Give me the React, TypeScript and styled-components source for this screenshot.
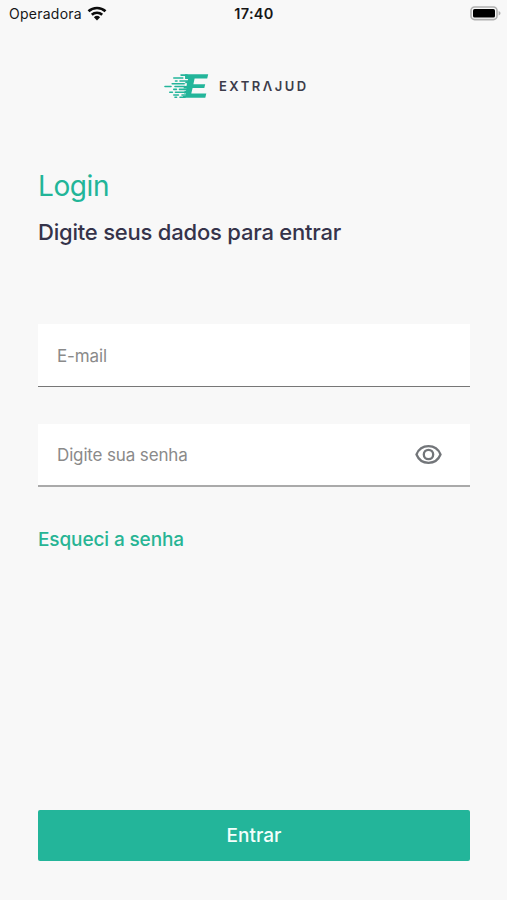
import React from "react";
import styled, { createGlobalStyle } from "styled-components";

const GlobalStyle = createGlobalStyle`
  *, *::before, *::after { box-sizing: border-box; }
  body { margin: 0; background: #f8f8f8; }
  button, input { font-family: inherit; }
`;

const Screen = styled.main`
  display: flex;
  flex-direction: column;
  width: 100%;
  height: 900px;
  background: #f8f8f8;
  font-family: Inter, "Liberation Sans", sans-serif;
`;

const StatusBar = styled.header`
  display: grid;
  grid-template-columns: 1fr auto 1fr;
  align-items: center;
  height: 26px;
  padding: 0 6px 0 9px;
  color: #161616;
`;

const Carrier = styled.div`
  display: flex;
  align-items: center;
  gap: 5px;
  font-size: 14px;
  letter-spacing: 0.25px;
`;

const Clock = styled.time`
  margin-right: 2px;
  font-size: 14.5px;
  font-weight: 600;
  letter-spacing: 0.3px;
`;

const Battery = styled.svg`
  justify-self: end;
  display: block;
`;

const Brand = styled.div`
  display: flex;
  align-items: center;
  gap: 10px;
  height: 26px;
  margin: 47px 0 0 164px;
`;

const Wordmark = styled.span`
  color: #3c3c4a;
  font-size: 13px;
  line-height: 26px;
  font-weight: 600;
  letter-spacing: 2.5px;
`;

const Content = styled.form`
  flex: 1;
  display: flex;
  flex-direction: column;
  align-items: flex-start;
  padding: 69px 37px 39px 38px;
`;

const Title = styled.h1`
  margin: 0;
  color: #22b598;
  font-size: 28px;
  line-height: 36px;
  font-weight: 400;
  letter-spacing: -0.4px;
`;

const Subtitle = styled.h2`
  margin: 13px 0 77px;
  color: #35334a;
  font-size: 22px;
  line-height: 30px;
  font-weight: 500;
  letter-spacing: -0.21px;
  white-space: nowrap;
`;

const Field = styled.label<{ $soft?: boolean }>`
  display: flex;
  align-items: center;
  width: 100%;
  height: 63px;
  margin-bottom: 37px;
  padding: 0 28px 0 19px;
  background: #fff;
  border-bottom: ${(p) => (p.$soft ? "2px solid #aaaaaa" : "1px solid #777777")};
`;

const Input = styled.input`
  flex: 1;
  min-width: 0;
  height: 100%;
  padding: 1px 0 0;
  border: 0;
  outline: 0;
  background: transparent;
  color: #333;
  font-size: 17px;
  letter-spacing: -0.14px;
  &::placeholder { color: #8a8a8a; opacity: 1; }
`;

const EyeButton = styled.button`
  display: flex;
  padding: 0;
  border: 0;
  background: none;
`;

const ForgotLink = styled.a`
  margin-top: 1px;
  color: #27b494;
  font-size: 19px;
  line-height: 30px;
  font-weight: 500;
  letter-spacing: -0.12px;
  text-decoration: none;
`;

const SubmitButton = styled.button`
  width: 100%;
  height: 51px;
  margin-top: auto;
  padding: 0;
  border: 0;
  border-radius: 2px;
  background: #23b59a;
  color: #f4fffc;
  font-size: 19px;
  font-weight: 500;
`;

const WifiIcon = () => (
  <svg width="20" height="15" viewBox="0 0 20 15" fill="none" stroke="#0c0c0c" strokeWidth="2.6">
    <path d="M1.5 5.3a12.4 12.4 0 0 1 17 0" />
    <path d="M4.8 8.8a7.6 7.6 0 0 1 10.4 0" />
    <path d="M10 14.4 6.9 11.2a4.5 4.5 0 0 1 6.2 0z" fill="#0c0c0c" stroke="none" />
  </svg>
);

const BatteryIcon = () => (
  <Battery width="31" height="15" viewBox="0 0 31 15">
    <rect x="1" y="1" width="26" height="12.6" rx="3.6" fill="#f8f8f8" stroke="#b0b0b0" strokeWidth="1.6" />
    <rect x="3" y="3" width="22" height="8.6" rx="1.6" fill="#000" />
    <path d="M28.6 5v4.6c1.3-.5 1.9-1.3 1.9-2.3s-.6-1.8-1.9-2.3z" fill="#b0b0b0" />
  </Battery>
);

const LogoMark = () => (
  <svg width="45" height="26" viewBox="0 0 45 26" fill="#23b59a">
    <path d="M21 1.2h23.2l-1 4.2H30.6l-1.2 5.8h11.8l-.9 3.8H28.6l-1.3 5.5h15l-1 4.3H18.6l.5-2h2.4l.5-2.2h-2l.6-2.8h1.4l.5-2.3h-3l.5-2.4h2.5l.6-2.8h-2l.5-2h2l.5-2.3h-3z" />
    <g fill="none" stroke="#23b59a" strokeWidth="1.6" strokeLinecap="round">
      <path d="M17 2.1h6M9.8 5h9M11.5 8h1.5M16 8h8M8.2 10.7h12M1 13.5h6M11 13.5h10M9.8 16.4h2.6M15.5 16.4h7M5.8 19.3h2.6M11.5 19.3h9M9.8 22h4.6M18 22h4M11 24.2h1.6M16 24.2h5" />
    </g>
  </svg>
);

const EyeIcon = () => (
  <svg width="27" height="21" viewBox="0 0 27 21" fill="none" stroke="#727579" strokeWidth="2.3">
    <path d="M1.5 10.5C3.7 5 8.2 2.2 13.5 2.2s9.8 2.8 12 8.3c-2.2 5.5-6.7 8.3-12 8.3S3.7 16 1.5 10.5z" />
    <circle cx="13.5" cy="10.5" r="4.7" />
  </svg>
);

export default function App() {
  return (
    <Screen>
      <GlobalStyle />
      <StatusBar>
        <Carrier>Operadora <WifiIcon /></Carrier>
        <Clock>17:40</Clock>
        <BatteryIcon />
      </StatusBar>
      <Brand>
        <LogoMark />
        <Wordmark>EXTRΛJUD</Wordmark>
      </Brand>
      <Content onSubmit={(e) => e.preventDefault()}>
        <Title>Login</Title>
        <Subtitle>Digite seus dados para entrar</Subtitle>
        <Field>
          <Input type="email" placeholder="E-mail" />
        </Field>
        <Field $soft>
          <Input type="password" placeholder="Digite sua senha" />
          <EyeButton type="button" aria-label="Mostrar senha"><EyeIcon /></EyeButton>
        </Field>
        <ForgotLink href="#">Esqueci a senha</ForgotLink>
        <SubmitButton type="submit">Entrar</SubmitButton>
      </Content>
    </Screen>
  );
}
